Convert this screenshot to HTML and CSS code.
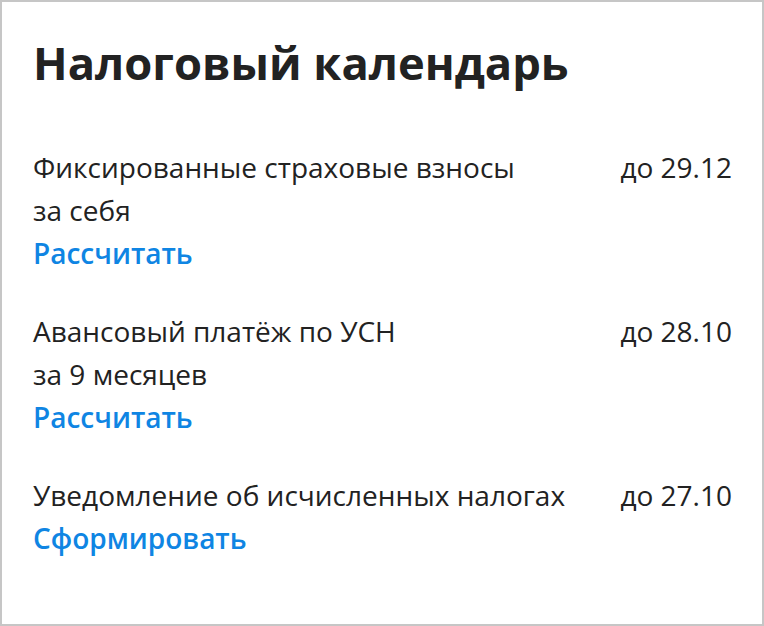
FILE: index.html
```html
<!DOCTYPE html>
<html lang="ru">
<head>
<meta charset="utf-8">
<title>Налоговый календарь</title>
<link rel="stylesheet" href="styles.css">
</head>
<body>
<section class="card">
  <h1 class="title">Налоговый календарь</h1>
  <ul class="events">
    <li class="event">
      <div class="event-main">
        <div class="event-name">Фиксированные страховые взносы<br>за себя</div>
        <a class="event-action" href="#">Рассчитать</a>
      </div>
      <div class="event-date">до 29.12</div>
    </li>
    <li class="event">
      <div class="event-main">
        <div class="event-name">Авансовый платёж по УСН<br>за 9 месяцев</div>
        <a class="event-action" href="#">Рассчитать</a>
      </div>
      <div class="event-date">до 28.10</div>
    </li>
    <li class="event">
      <div class="event-main">
        <div class="event-name">Уведомление об исчисленных налогах</div>
        <a class="event-action" href="#">Сформировать</a>
      </div>
      <div class="event-date">до 27.10</div>
    </li>
  </ul>
</section>
</body>
</html>
```
FILE: styles.css
```css
* { box-sizing: border-box; }
html, body { margin: 0; padding: 0; background: #fff; }
body {
  font-family: "Open Sans", "Noto Sans", sans-serif;
  color: #222;
}
.card {
  width: 764px;
  height: 626px;
  border: 2px solid #c6c6c6;
  padding: 34px 30px 0 31px;
}
.title {
  margin: 0;
  font-size: 45.3px;
  line-height: 54px;
  font-weight: 700;
  color: #222;
}
.events {
  list-style: none;
  margin: 56px 0 0;
  padding: 0;
  display: flex;
  flex-direction: column;
  gap: 35px;
}
.event {
  display: flex;
  justify-content: space-between;
  align-items: flex-start;
  font-size: 28px;
  line-height: 43px;
}
.event-main { display: flex; flex-direction: column; }
.event-action {
  color: #0f85e3;
  font-weight: 600;
  text-decoration: none;
}
.event-date { white-space: nowrap; }
```
